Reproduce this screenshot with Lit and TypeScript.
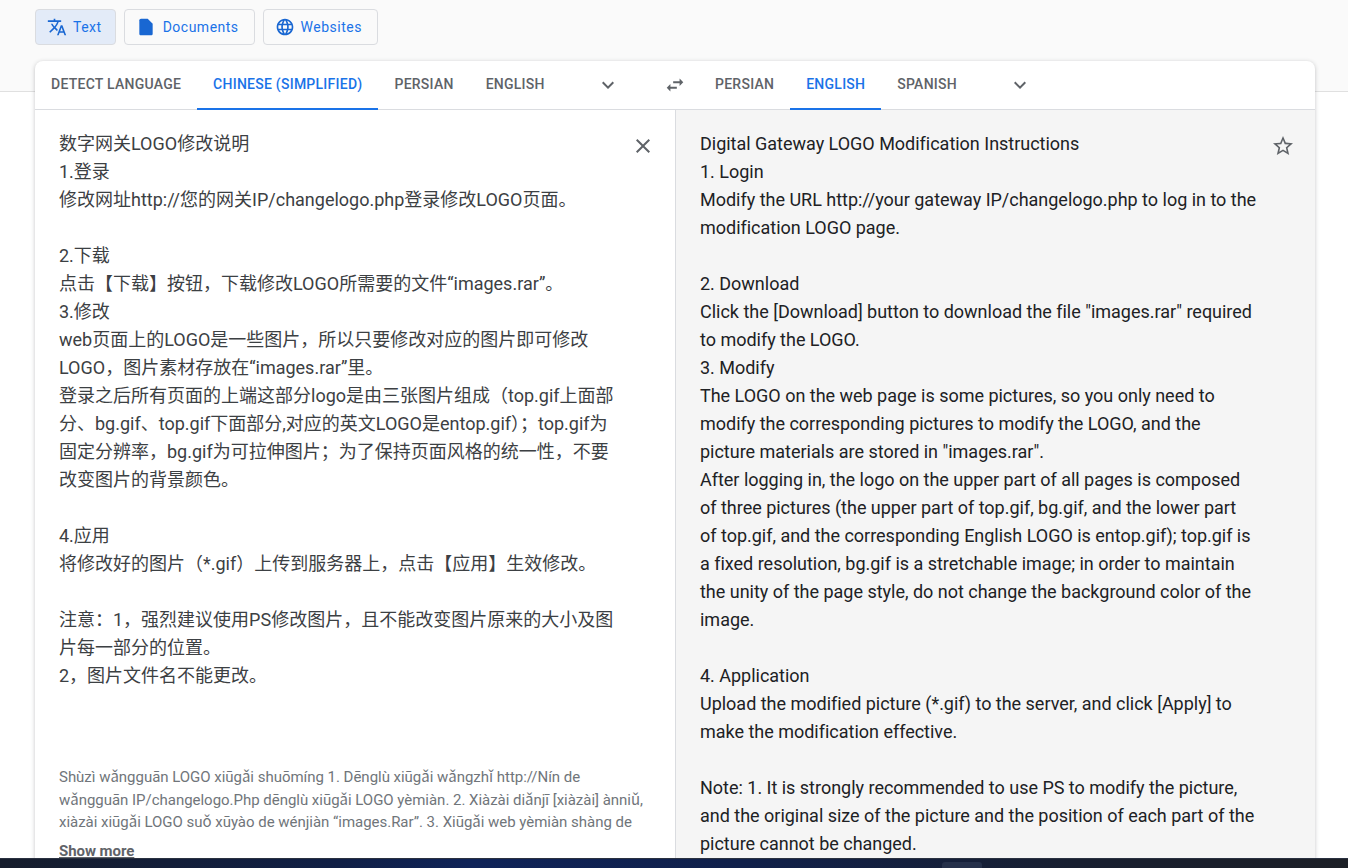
import { LitElement, html, css, svg } from "lit";
import { customElement } from "lit/decorators.js";

const P = {
  translate: "M12.87 15.07l-2.54-2.51.03-.03c1.74-1.94 2.98-4.17 3.71-6.53H17V4h-7V2H8v2H1v1.99h11.17C11.5 7.92 10.44 9.75 9 11.35 8.07 10.32 7.3 9.19 6.69 8h-2c.73 1.63 1.73 3.17 2.98 4.56l-5.09 5.02L4 19l5-5 3.11 3.11.76-2.04zM18.5 10h-2L12 22h2l1.12-3h4.75L21 22h2l-4.5-12zm-2.62 7l1.62-4.33L19.12 17h-3.24z",
  doc: "M14 2H6c-1.1 0-2 .9-2 2v16c0 1.1.9 2 2 2h12c1.1 0 2-.9 2-2V8l-6-6z",
  globe: "M11.99 2C6.47 2 2 6.48 2 12s4.47 10 9.99 10C17.52 22 22 17.52 22 12S17.52 2 11.99 2zm6.93 6h-2.95c-.32-1.25-.78-2.45-1.38-3.56 1.84.63 3.37 1.91 4.33 3.56zM12 4.04c.83 1.2 1.48 2.53 1.91 3.96h-3.82c.43-1.43 1.08-2.76 1.91-3.96zM4.26 14C4.1 13.36 4 12.69 4 12s.1-1.36.26-2h3.38c-.08.66-.14 1.32-.14 2 0 .68.06 1.34.14 2H4.26zm.82 2h2.95c.32 1.25.78 2.45 1.38 3.56-1.84-.63-3.37-1.9-4.33-3.56zm2.95-8H5.08c.96-1.66 2.49-2.93 4.33-3.56C8.81 5.55 8.35 6.75 8.03 8zM12 19.96c-.83-1.2-1.48-2.53-1.91-3.96h3.82c-.43 1.43-1.08 2.76-1.91 3.96zM14.34 14H9.66c-.09-.66-.16-1.32-.16-2 0-.68.07-1.35.16-2h4.68c.09.65.16 1.32.16 2 0 .68-.07 1.34-.16 2zm.25 5.56c.6-1.11 1.06-2.31 1.38-3.56h2.95c-.96 1.65-2.49 2.93-4.33 3.56zM16.36 14c.08-.66.14-1.32.14-2 0-.68-.06-1.34-.14-2h3.38c.16.64.26 1.31.26 2s-.1 1.36-.26 2h-3.38z",
  swap: "M6.99 11L3 15l3.99 4v-3H14v-2H6.99v-3zM21 9l-3.99-4v3H10v2h7.01v3L21 9z",
  chevron: "M16.59 8.59L12 13.17 7.41 8.59 6 10l6 6 6-6z",
  close: "M19 6.41L17.59 5 12 10.59 6.41 5 5 6.41 10.59 12 5 17.59 6.41 19 12 13.41 17.59 19 19 17.59 13.41 12z",
  star: "M22 9.24l-7.19-.62L12 2 9.19 8.63 2 9.24l5.46 4.73L5.82 21 12 17.27 18.18 21l-1.63-7.03L22 9.24zM12 15.4l-3.76 2.27 1-4.28-3.32-2.88 4.38-.38L12 6.1l1.71 4.04 4.38.38-3.32 2.88 1 4.28L12 15.4z",
};
const icon = (d: string, cls = "") =>
  html`<svg class="icon ${cls}" viewBox="0 0 24 24" aria-hidden="true">${svg`<path d=${d}></path>`}</svg>`;

const SRC = `数字网关LOGO修改说明
1.登录
修改网址http://您的网关IP/changelogo.php登录修改LOGO页面。

2.下载
点击【下载】按钮，下载修改LOGO所需要的文件“images.rar”。
3.修改
web页面上的LOGO是一些图片，所以只要修改对应的图片即可修改
LOGO，图片素材存放在“images.rar”里。
登录之后所有页面的上端这部分logo是由三张图片组成（top.gif上面部
分、bg.gif、top.gif下面部分,对应的英文LOGO是entop.gif）；top.gif为
固定分辨率，bg.gif为可拉伸图片；为了保持页面风格的统一性，不要
改变图片的背景颜色。

4.应用
将修改好的图片（*.gif）上传到服务器上，点击【应用】生效修改。

注意：1，强烈建议使用PS修改图片，且不能改变图片原来的大小及图
片每一部分的位置。
2，图片文件名不能更改。`;

const PINYIN = `Shùzì wǎngguān LOGO xiūgǎi shuōmíng 1. Dēnglù xiūgǎi wǎngzhǐ http://Nín de
wǎngguān IP/changelogo.Php dēnglù xiūgǎi LOGO yèmiàn. 2. Xiàzài diǎnjī [xiàzài] ànniǔ,
xiàzài xiūgǎi LOGO suǒ xūyào de wénjiàn “images.Rar”. 3. Xiūgǎi web yèmiàn shàng de`;

const OUT = `Digital Gateway LOGO Modification Instructions
1. Login
Modify the URL http://your gateway IP/changelogo.php to log in to the
modification LOGO page.

2. Download
Click the [Download] button to download the file "images.rar" required
to modify the LOGO.
3. Modify
The LOGO on the web page is some pictures, so you only need to
modify the corresponding pictures to modify the LOGO, and the
picture materials are stored in "images.rar".
After logging in, the logo on the upper part of all pages is composed
of three pictures (the upper part of top.gif, bg.gif, and the lower part
of top.gif, and the corresponding English LOGO is entop.gif); top.gif is
a fixed resolution, bg.gif is a stretchable image; in order to maintain
the unity of the page style, do not change the background color of the
image.

4. Application
Upload the modified picture (*.gif) to the server, and click [Apply] to
make the modification effective.

Note: 1. It is strongly recommended to use PS to modify the picture,
and the original size of the picture and the position of each part of the
picture cannot be changed.`;

@customElement("app-root")
export class AppRoot extends LitElement {
  static styles = css`
    :host {
      display: flex;
      flex-direction: column;
      height: 868px;
      overflow: hidden;
      font-family: Roboto, "Noto Sans CJK SC", sans-serif;
      background: #fff;
    }
    .page {
      flex: 1;
      min-height: 0;
      overflow: hidden;
      padding: 9px 33px 0 35px;
      background: linear-gradient(#fafafa 0 91px, #e0e0e0 91px 92px, #fff 92px);
    }
    .taskbar {
      height: 10px;
      flex: none;
      padding: 3px 0 0 942px;
      background: linear-gradient(90deg, #161d2c 0%, #101f45 25%, #0f2358 35%, #10204a 55%, #181f30 80%, #1c1f26 100%);
      border-top: 1px solid #2a3140;
      box-sizing: border-box;
    }
    .taskbar i {
      display: block;
      width: 40px;
      height: 6px;
      border-radius: 3px 3px 0 0;
      background: #25304a;
    }
    .icon {
      display: block;
      width: 24px;
      height: 24px;
      fill: #5f6368;
      flex: none;
    }
    .modes {
      display: flex;
      gap: 8px;
      height: 36px;
      margin-bottom: 16px;
    }
    .mode {
      display: flex;
      align-items: center;
      gap: 6px;
      box-sizing: border-box;
      padding: 0 15px 0 11px;
      border: 1px solid #dadce0;
      border-radius: 4px;
      color: #1a73e8;
      font-family: Roboto, sans-serif;
      font-size: 14px;
      font-weight: 400;
      letter-spacing: 0.5px;
    }
    .mode .icon {
      width: 20px;
      height: 20px;
      fill: #1967d2;
    }
    .mode.on {
      background: #e3ebf8;
      padding-right: 13px;
    }
    .mode.doc {
      gap: 7px;
    }
    .card {
      background: #fff;
      border-radius: 8px;
      box-shadow: 0 1px 4px rgba(60, 64, 67, 0.3);
      overflow: hidden;
      height: 820px;
    }
    .bar {
      display: grid;
      grid-template-columns: 616px 48px 1fr;
      height: 49px;
      box-sizing: border-box;
      border-bottom: 1px solid #dadce0;
    }
    .side {
      display: flex;
      align-items: stretch;
    }
    .tab {
      display: flex;
      align-items: center;
      padding: 0 16px 2px;
      margin-bottom: -1px;
      font-size: 14px;
      font-weight: 500;
      letter-spacing: 0.25px;
      color: #5f6368;
      border-bottom: 2px solid transparent;
      box-sizing: border-box;
    }
    .tab.on {
      color: #1a73e8;
      border-bottom-color: #1a73e8;
    }
    .chev {
      align-self: center;
      margin-left: 35px;
    }
    .swap {
      display: flex;
      align-items: center;
      justify-content: center;
    }
    .swap .icon {
      width: 22px;
      height: 22px;
    }
    .panes {
      display: grid;
      grid-template-columns: 641px 1fr;
      height: 770px;
    }
    .pane {
      position: relative;
      padding: 20px 24px;
      box-sizing: border-box;
      overflow: hidden;
    }
    .left {
      border-right: 1px solid #dadce0;
    }
    .right {
      background: #f5f5f5;
    }
    .text {
      margin: 0;
      font: inherit;
      font-size: 18px;
      line-height: 28px;
      white-space: pre;
      color: #3c4043;
    }
    .right .text {
      color: #202124;
      letter-spacing: -0.015px;
    }
    .pinyin {
      margin: 76px 0 0;
      font: inherit;
      font-size: 15px;
      line-height: 22.5px;
      letter-spacing: -0.025px;
      white-space: pre;
      color: #70757a;
    }
    .more {
      margin-top: 7px;
      font-size: 15px;
      line-height: 20px;
      font-weight: 700;
      letter-spacing: -0.05px;
      color: #5f6368;
      text-decoration: underline;
    }
    .act {
      position: absolute;
      top: 24px;
      right: 20px;
    }
  `;

  render() {
    return html`
      <div class="page">
        <div class="modes">
          <div class="mode on">${icon(P.translate)}<span>Text</span></div>
          <div class="mode doc">${icon(P.doc)}<span>Documents</span></div>
          <div class="mode">${icon(P.globe)}<span>Websites</span></div>
        </div>
        <div class="card">
          <div class="bar">
            <div class="side">
              <div class="tab">DETECT LANGUAGE</div>
              <div class="tab on">CHINESE (SIMPLIFIED)</div>
              <div class="tab">PERSIAN</div>
              <div class="tab">ENGLISH</div>
              ${icon(P.chevron, "chev")}
            </div>
            <div class="swap">${icon(P.swap)}</div>
            <div class="side">
              <div class="tab">PERSIAN</div>
              <div class="tab on">ENGLISH</div>
              <div class="tab">SPANISH</div>
              ${icon(P.chevron, "chev")}
            </div>
          </div>
          <div class="panes">
            <div class="pane left">
              <pre class="text">${SRC}</pre>
              <pre class="pinyin">${PINYIN}</pre>
              <div class="more">Show more</div>
              ${icon(P.close, "act")}
            </div>
            <div class="pane right">
              <pre class="text">${OUT}</pre>
              ${icon(P.star, "act")}
            </div>
          </div>
        </div>
      </div>
      <div class="taskbar"><i></i></div>
    `;
  }
}
